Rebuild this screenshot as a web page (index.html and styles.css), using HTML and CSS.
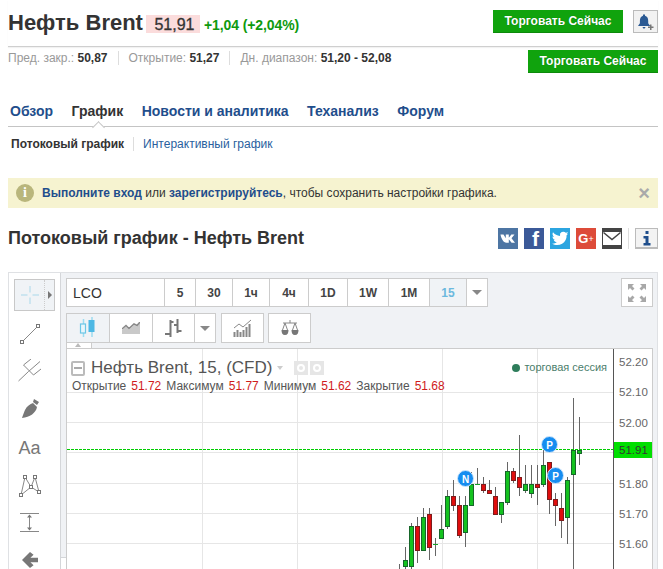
FILE: index.html
```html
<!DOCTYPE html>
<html lang="ru">
<head>
<meta charset="utf-8">
<title>Нефть Brent</title>
<link rel="stylesheet" href="styles.css">
</head>
<body>
<div class="page">
  <header class="top">
    <h1 class="title">Нефть Brent</h1>
    <span class="price">51,91</span>
    <span class="change">+1,04 (+2,04%)</span>
    <a class="trade trade-first">Торговать Сейчас</a>
    <button class="bell" aria-label="alert">
      <svg width="17" height="18" viewBox="0 0 17 18"><path class="bell-body" d="M6 1.500h2v1.200c2.300.6 3.200 2.600 3.200 5v2.600l2 2.700H1l1.900-2.700V7.700c0-2.400 1-4.400 3.100-5zM5.300 14h3.400l-1.700 2z"/><path class="bell-plus" d="M11 13.500h2v-2h1.500v2h2V15h-2v2H13v-2h-2z"/></svg>
    </button>
  </header>

  <div class="stats-row">
    <div class="stats">
      <span class="stat">Пред. закр.: <b>50,87</b></span>
      <span class="stat">Открытие: <b>51,27</b></span>
      <span class="stat">Дн. диапазон: <b>51,20 - 52,08</b></span>
    </div>
    <a class="trade">Торговать Сейчас</a>
  </div>

  <nav class="tabs">
    <a class="tab">Обзор</a>
    <a class="tab tab-active">График</a>
    <a class="tab">Новости и аналитика</a>
    <a class="tab">Теханализ</a>
    <a class="tab">Форум</a>
  </nav>

  <div class="subtabs">
    <span class="sub sub-active">Потоковый график</span>
    <a class="sub">Интерактивный график</a>
  </div>

  <div class="notice">
    <span class="notice-icon">i</span>
    <p class="notice-text"><a>Выполните вход</a> или <a>зарегистрируйтесь</a>, чтобы сохранить настройки графика.</p>
    <span class="notice-close">×</span>
  </div>

  <div class="heading-row">
    <h2 class="heading">Потоковый график - Нефть Brent</h2>
    <div class="share">
      <span class="soc soc-vk"><svg width="20" height="21" viewBox="0 0 20 21"><path d="M2.500 6.500h3l2.300 3.800V6.500h3v3.300l2.600-3.300h3.100l-3 3.800 3.500 4.400h-3.400l-2.800-3.500v3.500H8.500C5.300 14.700 3.200 10.500 2.500 6.500z"/></svg></span>
      <span class="soc soc-fb">f</span>
      <span class="soc soc-tw"><svg width="20" height="21" viewBox="0 0 20 21"><path d="M18.500 5.300c-.6.300-1.300.5-2 .6.700-.4 1.300-1.100 1.500-1.900-.7.400-1.400.7-2.200.8a3.400 3.400 0 0 0-5.800 3.100C7.200 7.800 4.700 6.400 3 4.300c-.9 1.600-.4 3.500 1 4.500-.5 0-1-.2-1.500-.4 0 1.700 1.200 3.100 2.700 3.400-.5.100-1 .1-1.500 0 .4 1.400 1.700 2.300 3.200 2.400-1.400 1.100-3.100 1.600-4.900 1.400 4.800 3 11.200 1.400 13.600-3.600.8-1.600 1.100-3.200 1-4.800.6-.5 1.100-1.100 1.400-1.700z"/></svg></span>
      <span class="soc soc-gp">G<small>+</small></span>
      <span class="soc soc-mail"><svg width="20" height="21" viewBox="0 0 20 21"><path class="mail-bg" d="M1 4h18v13H1z"/><path class="mail-line" d="M1.500 4.500 10 11.500l8.500-7"/></svg></span>
      <span class="share-sep"></span>
      <button class="info-btn" aria-label="info"><svg width="10" height="15" viewBox="0 0 10 15"><path d="M3.500 0h3v3h-3zM1.500 5h5v7h2v2.500h-7V12h2V7.500h-2z"/></svg></button>
    </div>
  </div>

  <section class="widget">
    <aside class="tools">
      <div class="cursor-btn">
        <svg width="20" height="20" viewBox="0 0 20 20"><path class="i-cross" d="M10 1v6.500M10 12.500V19M1 10h6.500M12.500 10H19"/></svg>
        <i class="cursor-more"></i>
      </div>
      <svg class="tool t-line" width="24" height="24" viewBox="0 0 24 24"><path class="i-s" d="M5.500 18.500 18.500 5.500"/><rect class="i-box" x="2.500" y="18.500" width="3" height="3"/><rect class="i-box" x="18.500" y="2.500" width="3" height="3"/></svg>
      <svg class="tool t-fork" width="24" height="24" viewBox="0 0 24 24"><path class="i-s" d="M.5 22 10.500 12.500M5.500 6 15.500 16M5.500 6 13 0M10.500 12.500 22 2.500M15.500 16 23 10"/></svg>
      <svg class="tool t-brush" width="22" height="22" viewBox="0 0 22 22"><path class="i-f" d="M14 5 18 9c-1 6-7 10-15 11 1-3 2-6 3-8 2-4 5-6 8-7zM15 1l5 3-2 3-4-3z"/></svg>
      <span class="tool t-aa">Aa</span>
      <svg class="tool t-poly" width="24" height="24" viewBox="0 0 24 24"><path class="i-s" d="M7 3 3 21M7 3l6 10M17 3l-4 10M17 3l4 15M3 21l10-8M21 18l-8-5"/><rect class="i-box" x="5.500" y="1.500" width="3" height="3"/><rect class="i-box" x="15.500" y="1.500" width="3" height="3"/><rect class="i-box" x="1.500" y="19.500" width="3" height="3"/><rect class="i-box" x="19.500" y="16.500" width="3" height="3"/><rect class="i-box" x="11.500" y="11.500" width="3" height="3"/></svg>
      <svg class="tool t-measure" width="22" height="22" viewBox="0 0 22 22"><path class="i-s" d="M1 2.500h19M1 20.500h19M10.500 5v12"/><path class="i-f" d="M10.500 3.500 8 6.500h5zM10.500 19.500 8 16.500h5z"/></svg>
      <svg class="tool t-back" width="16" height="16" viewBox="0 0 18 18"><path class="i-f" d="M9 0l4 3-3.500 3.500H18v5H9.500L13 15l-4 3-9-9z"/></svg>
    </aside>

    <div class="main">
      <i class="gutter-end"></i>
      <div class="bar bar-one">
        <div class="seg seg-time">
          <span class="cell cell-sym">LCO</span>
          <span class="cell">5</span>
          <span class="cell">30</span>
          <span class="cell">1ч</span>
          <span class="cell">4ч</span>
          <span class="cell">1D</span>
          <span class="cell">1W</span>
          <span class="cell">1M</span>
          <span class="cell cell-on">15</span>
          <span class="cell"><i class="caret"></i></span>
        </div>
        <button class="expand" aria-label="fullscreen">
          <svg width="20" height="20" viewBox="0 0 20 20"><path class="i-f" d="M1 1h6L5 3l2.500 2.500L5.500 7.500 3 5 1 7zM19 1h-6l2 2-2.500 2.500 2 2L17 5l2 2zM1 19h6l-2-2 2.500-2.500-2-2L3 15l-2-2zM19 19h-6l2-2-2.500-2.500 2-2L17 15l2-2z"/></svg>
        </button>
      </div>
      <div class="bar bar-two">
        <div class="seg seg-type">
          <span class="cell cell-on">
            <svg width="20" height="22" viewBox="0 0 20 22"><path class="i-blue" d="M5.500 2v18M14 0v20"/><rect class="i-hollow" x="2.500" y="7" width="5" height="9"/><rect class="i-solid" x="10.500" y="3" width="6" height="12"/></svg>
          </span>
          <span class="cell">
            <svg width="18" height="12" viewBox="0 0 18 12"><path class="i-area" d="M0 8 4 4.500 7 7.500 12 3l3 1.500L18 1v11H0z"/><path class="i-s2" d="M0 7 4 3.500 7 6.500 12 2l3 1.500L18 0"/></svg>
          </span>
          <span class="cell">
            <svg width="17" height="18" viewBox="0 0 17 18"><path class="i-bold" d="M5.500 1v17M0 15h5.500M5.500 3h3M12.500 0v14M9 6h3.500M12.500 12h4"/></svg>
          </span>
          <span class="cell"><i class="caret"></i></span>
        </div>
        <div class="seg seg-one">
          <span class="cell">
            <svg width="19" height="18" viewBox="0 0 19 18"><path class="i-s" d="M1 9l5-4 4 3 8-7"/><path class="i-bars" d="M1.500 18v-5M4.500 18v-7M7.500 18v-5M10.500 18v-7M13.500 18V8M16.500 18V5"/></svg>
          </span>
        </div>
        <div class="seg seg-one">
          <span class="cell">
            <svg width="18" height="17" viewBox="0 0 18 17"><path class="i-s" d="M2 3h14M9 0v3M4 3 1.500 10M4 3l2.500 7M14 3l-2.500 7M14 3l2.500 7"/><path class="i-f" d="M.5 10h7c0 3-1 5-3.500 5S.5 13 .5 10zM10.500 10h7c0 3-1 5-3.500 5s-3.500-2-3.500-5z"/></svg>
          </span>
        </div>
      </div>
      <div class="pane-tab"><i></i></div>
      <div class="pane">
        <svg class="plot" width="586" height="240" viewBox="67 349 586 240">
          <path class="grid" d="M67 392.500H613M67 422.500H613M67 452.500H613M67 483.500H613M67 513.500H613M67 543.500H613M202.500 349V589M297.500 349V589M442.500 349V589M537.500 349V589"/>
          <path class="wick" d="M399.500 564V569M405.500 547V569M411.500 523V569M417.500 517V563M423.500 508V550M429.500 508V560M435.500 538V556M441.500 505V538M447.500 490V529M453.500 480V511M459.500 496V538M465.500 496V547M471.500 472V505M477.500 468V484M483.500 477V493M489.500 480V493M495.500 487V514M501.500 502V523M507.500 462V505M513.500 468V483M519.500 435V496M525.500 465V493M531.500 465V498M537.500 465V505M543.500 450V487M549.500 462V514M555.500 493V526M561.500 493V538M567.500 477V544M573.500 398V569M579.500 417V465"/>
          <g class="up">
            <rect x="403.500" y="560.500" width="4" height="6"/>
            <rect x="409.500" y="526.500" width="4" height="40"/>
            <rect x="421.500" y="517.500" width="4" height="33"/>
            <path d="M433 544.500h5M475 484.500h5"/>
            <rect x="439.500" y="529.500" width="4" height="9"/>
            <rect x="445.500" y="496.500" width="4" height="30"/>
            <rect x="463.500" y="505.500" width="4" height="27"/>
            <rect x="469.500" y="484.500" width="4" height="21"/>
            <rect x="499.500" y="502.500" width="4" height="12"/>
            <rect x="505.500" y="471.500" width="4" height="31"/>
            <rect x="523.500" y="484.500" width="4" height="6"/>
            <rect x="529.500" y="484.500" width="4" height="9"/>
            <rect x="541.500" y="465.500" width="4" height="19"/>
            <rect x="565.500" y="480.500" width="4" height="37"/>
            <rect x="571.500" y="450.500" width="4" height="24"/>
            <rect x="577.500" y="450.500" width="4" height="3"/>
          </g>
          <g class="down">
            <rect x="415.500" y="526.500" width="4" height="24"/>
            <rect x="427.500" y="514.500" width="4" height="33"/>
            <rect x="451.500" y="496.500" width="4" height="9"/>
            <rect x="457.500" y="505.500" width="4" height="30"/>
            <rect x="481.500" y="484.500" width="4" height="6"/>
            <rect x="487.500" y="490.500" width="4" height="3"/>
            <rect x="493.500" y="496.500" width="4" height="18"/>
            <rect x="511.500" y="471.500" width="4" height="9"/>
            <rect x="517.500" y="477.500" width="4" height="10"/>
            <rect x="535.500" y="484.500" width="4" height="3"/>
            <rect x="547.500" y="462.500" width="4" height="37"/>
            <rect x="553.500" y="499.500" width="4" height="6"/>
            <rect x="559.500" y="508.500" width="4" height="12"/>
          </g>
          <path class="last-line" d="M67 449.500H613"/>
          <g class="pin">
            <circle cx="465.500" cy="478.500" r="8"/><text x="465.500" y="482.500">N</text>
            <circle cx="549.500" cy="444.500" r="8"/><text x="549.500" y="448.500">P</text>
            <circle cx="555.500" cy="475.500" r="8"/><text x="555.500" y="479.500">P</text>
          </g>
          <path class="axis" d="M613.500 349V589"/>
          <rect class="last-box" x="614" y="442" width="38" height="16"/>
          <g class="ticks">
            <text x="619" y="366">52.20</text>
            <text x="619" y="396">52.10</text>
            <text x="619" y="427">52.00</text>
            <text x="619" y="454">51.91</text>
            <text x="619" y="488">51.80</text>
            <text x="619" y="518">51.70</text>
            <text x="619" y="548">51.60</text>
          </g>
        </svg>
        <div class="legend">
          <div class="legend-title">
            <i class="legend-min"></i>
            <span class="legend-name">Нефть Brent, 15, (CFD)</span>
            <i class="legend-caret"></i>
            <i class="legend-btn"><b class="lb-eye"></b></i>
            <i class="legend-btn"><b class="lb-gear"></b></i>
          </div>
          <div class="legend-ohlc">
            <span>Открытие</span><em>51.72</em>
            <span>Максимум</span><em>51.77</em>
            <span>Минимум</span><em>51.62</em>
            <span>Закрытие</span><em>51.68</em>
          </div>
        </div>
        <div class="session"><i></i>торговая сессия</div>
      </div>
    </div>
  </section>
</div>
</body>
</html>
```

FILE: styles.css
```css
* { box-sizing: border-box; }
html, body { margin: 0; height: 569px; overflow: hidden; background: #fff; }
body { font-family: "Liberation Sans", Arial, sans-serif; color: #333; }
.page { width: 663px; padding-left: 8px; }
h1, h2, p { margin: 0; }
button { padding: 0; font: inherit; cursor: pointer; }

/* header */
.top { display: flex; align-items: flex-start; width: 650px; height: 47px; padding-top: 10px; border-bottom: 1px solid #cfcfcf; box-shadow: 0 1px 1px #f2f2f2; }
.title { font-size: 22px; line-height: 26px; font-weight: bold; color: #333; }
.price { margin: 5px 0 0 3px; width: 54px; height: 18px; line-height: 19px; text-align: center; font-size: 16px; background: #fbdcdc; color: #333; -webkit-text-stroke: .3px #333; padding-left: 3px; }
.change { margin: 7px 0 0 4px; font-size: 14px; line-height: 17px; font-weight: bold; color: #0e9a0e; letter-spacing: -.1px; }
.trade { display: block; width: 130px; height: 23px; line-height: 22px; text-align: center; font-size: 12px; font-weight: bold; color: #fff; background: #10a30d; border-bottom: 1px solid #0d8a0b; text-shadow: 0 0 1px rgba(0,0,0,.3); }
.trade-first { margin-left: auto; }
.bell { width: 25px; height: 23px; margin-left: 10px; border: 1px solid #bbb; background: #f2f2f2; display: flex; align-items: center; justify-content: center; }
.bell-body { fill: #2b5a94; }
.bell-plus { fill: #777; }

/* stats */
.stats-row { display: flex; justify-content: space-between; align-items: flex-start; width: 650px; height: 53px; padding-top: 3px; }
.stats { display: flex; font-size: 12px; line-height: 14px; color: #999; margin-top: 1px; }
.stat { padding-right: 10px; margin-right: 10px; border-right: 1px solid #ddd; height: 14px; }
.stat:last-child { border: 0; }
.stat b { color: #333; }

/* tabs */
.tabs { position: relative; display: flex; gap: 18.500px; width: 650px; height: 27px; padding: 2px 0 0 2px; border-bottom: 1px solid #c4c4c4; font-size: 14px; line-height: 18px; font-weight: bold; }
.tab { position: relative; color: #1f4e8c; }
.tab-active { color: #333; height: 25px; }
.tab-active::after { content: ""; position: absolute; left: 50%; bottom: -5px; width: 8px; height: 8px; margin-left: -3px; background: #fff; border-left: 1px solid #c4c4c4; border-top: 1px solid #c4c4c4; transform: rotate(45deg); }
.subtabs { display: flex; align-items: center; height: 51px; padding: 10px 0 27px 3px; font-size: 12px; line-height: 14px; }
.sub { color: #2a5f9e; }
.sub-active { color: #333; font-weight: bold; padding-right: 9px; margin-right: 9px; border-right: 1px solid #ddd; }

/* notice */
.notice { display: flex; align-items: center; width: 650px; height: 30px; padding: 0 8px 0 8px; background: #f6f3d0; font-size: 12px; }
.notice-icon { width: 18px; height: 18px; border-radius: 50%; background: #b9b67c; color: #fff; font: bold 14px/18px "Liberation Serif", serif; text-align: center; }
.notice-text { margin-left: 8px; color: #333; flex: 1; }
.notice-text a { color: #1f4e8c; font-weight: bold; }
.notice-close { color: #aaa; font-size: 20px; line-height: 20px; font-weight: bold; }

/* heading */
.heading-row { display: flex; justify-content: space-between; align-items: center; width: 650px; height: 21px; margin-top: 20px; }
.heading { font-size: 18px; line-height: 21px; font-weight: bold; color: #333; }
.share { display: flex; align-items: center; gap: 6px; }
.soc { display: block; width: 20px; height: 21px; color: #fff; text-align: center; fill: #fff; }
.soc svg { display: block; }
.soc-vk { background: #4d75a3; }
.soc-fb { background: #3b5998; font: bold 21px/22px "Liberation Sans", sans-serif; padding-left: 3px; }
.soc-tw { background: #2ca5e0; }
.soc-gp { background: #dd4b39; font: bold 13px/21px "Liberation Sans", sans-serif; }
.soc-gp small { font-size: 9px; font-weight: normal; vertical-align: 1px; }
.soc-mail { background: #444; }
.mail-bg { fill: #fff; }
.mail-line { fill: none; stroke: #444; stroke-width: 1.500; }
.share-sep { width: 1px; height: 21px; background: #ddd; }
.info-btn { width: 23px; height: 21px; border: 1px solid #bbb; border-bottom-width: 2px; background: #f3f3f3; display: flex; align-items: center; justify-content: center; fill: #1f4e8c; }

/* widget */
.widget { display: flex; width: 650px; height: 320px; margin-top: 23px; border: 1px solid #dfe1e4; background: #f0f2f5; }
.tools { display: flex; flex-direction: column; align-items: center; width: 52px; flex: none; padding: 6px 10px 0 0; background: #fff; border-right: 1px solid #d4d6d9; }
.cursor-btn { position: relative; display: flex; align-items: center; align-self: flex-start; width: 41px; height: 32px; margin-left: 5px; padding-left: 5px; background: #f0f3f6; border: 1px solid #c8c8c8; }
.cursor-more { position: absolute; right: 0; top: 0; width: 10px; height: 30px; border-left: 1px dotted #ccc; }
.cursor-more::after { content: ""; position: absolute; left: 3px; top: 11px; border: 4px solid transparent; border-left-color: #777; border-right-width: 0; }
.i-cross { stroke: #a9d8ea; stroke-width: 1; fill: none; }
.tool { display: block; flex: none; }
.t-line { margin-top: 11px; }
.t-fork { margin-top: 13px; }
.t-brush { margin-top: 15px; }
.t-aa { margin-top: 17px; font-size: 18px; line-height: 22px; color: #777; }
.t-poly { margin-top: 15px; }
.t-measure { margin-top: 13px; }
.t-back { margin-top: 19px; }
.i-s { fill: none; stroke: #888; stroke-width: 1; }
.i-s2 { fill: none; stroke: #888; stroke-width: 1.500; }
.i-f { fill: #777; }
.i-box { fill: #fff; stroke: #777; stroke-width: 1; }
.i-area { fill: #c9c9c9; }
.i-bold { fill: none; stroke: #777; stroke-width: 2; }
.i-bars { fill: none; stroke: #888; stroke-width: 2; }
.i-blue { fill: none; stroke: #9cdcf0; stroke-width: 1.500; }
.i-hollow { fill: #e8f6fb; stroke: #6cc6e6; stroke-width: 1.200; }
.i-solid { fill: #4db8e4; }

.main { position: relative; display: flex; flex-direction: column; flex: 1; min-width: 0; padding: 5px 4px 0 5px; }
.gutter-end { position: absolute; left: 0; top: 284px; width: 5px; height: 40px; background: #fff; border-top: 1px solid #d4d6d9; }
.bar { display: flex; flex: none; }
.bar-one { height: 29px; margin-bottom: 6px; justify-content: space-between; }
.bar-two { height: 30px; gap: 4px; }
.seg { display: grid; height: 100%; background: #fff; border: 1px solid #ccc; border-right: 0; font-size: 12px; font-weight: bold; color: #444; }
.seg-time { grid-template-columns: 98px 31px 37px 37px 39px 39px 41px 41px 37px 21px; }
.seg-type { grid-template-columns: 43px 43px 42px 21px; margin-right: 1px; }
.seg-one { grid-template-columns: 42px; }
.cell { display: flex; align-items: center; justify-content: center; border-right: 1px solid #ccc; }
.cell-sym { justify-content: flex-start; padding-left: 6px; font-size: 14px; font-weight: normal; color: #333; }
.cell-on { background: #f0f3f6; color: #6cb9de; }
.caret { width: 0; height: 0; border: 5px solid transparent; border-top: 5px solid #888; border-bottom-width: 0; }
.expand { width: 32px; height: 29px; background: #fff; border: 1px solid #ccc; display: flex; align-items: center; justify-content: center; }
.expand .i-f { fill: #a8a8a8; }

.pane-tab { position: relative; flex: none; width: 26px; height: 5px; background: #fff; border: 1px solid #ccc; border-top: 0; border-bottom: 0; }
.pane-tab i { position: absolute; left: 8px; top: 0; border: 3px solid transparent; border-top: 0; border-bottom: 4px solid #bbb; }
.pane { position: relative; flex: 1; min-height: 0; background: #fff; border: 1px solid #ccc; overflow: hidden; }
.plot { display: block; }
.grid { fill: none; stroke: #e6e6e6; stroke-width: 1; }
.wick { fill: none; stroke: #666; stroke-width: 1; }
.up rect { fill: #14c21f; stroke: #17662a; stroke-width: 1; }
.up path { fill: none; stroke: #17a02a; stroke-width: 1; }
.down rect { fill: #e00d0d; stroke: #7c1c1c; stroke-width: 1; }
.last-line { fill: none; stroke: #00cc00; stroke-width: 1; stroke-dasharray: 3 1; }
.pin circle { fill: #168df0; stroke: #cfe6fb; stroke-width: 1; }
.pin text { fill: #fff; font: bold 10px "Liberation Sans", sans-serif; text-anchor: middle; }
.axis { fill: none; stroke: #555; stroke-width: 1; }
.last-box { fill: #00de00; }
.ticks text { fill: #666; font: 11.500px "Liberation Sans", sans-serif; }
.ticks text:nth-child(4) { fill: #333; }

.legend { position: absolute; left: 4px; top: 10px; }
.legend-title { display: flex; align-items: center; height: 18px; }
.legend-min { position: relative; width: 14px; height: 15px; border: 2px solid #bbb; border-radius: 2px; }
.legend-min::after { content: ""; position: absolute; left: 1px; right: 1px; top: 4px; height: 2px; background: #aaa; }
.legend-name { margin-left: 6px; font-size: 17px; line-height: 18px; color: #555; white-space: nowrap; }
.legend-caret { margin: 0 11px 0 5px; border: 3.500px solid transparent; border-top: 4px solid #ccc; border-bottom: 0; }
.legend-btn { display: flex; align-items: center; justify-content: center; width: 14px; height: 14px; margin-right: 2px; background: #e6e6e6; }
.legend-btn b { display: block; width: 8px; height: 8px; border-radius: 50%; border: 2px solid #fff; }
.legend-ohlc { display: flex; margin-top: 2px; padding-left: 1px; font-size: 12px; line-height: 14px; color: #555; white-space: nowrap; }
.legend-ohlc em { margin: 0 5px; font-style: normal; color: #d01b1b; }
.session { position: absolute; right: 45px; top: 12px; display: flex; align-items: center; gap: 4px; font-size: 11px; line-height: 13px; color: #4a7d6b; }
.session i { width: 8px; height: 8px; border-radius: 50%; background: #2e7d5b; }
```
